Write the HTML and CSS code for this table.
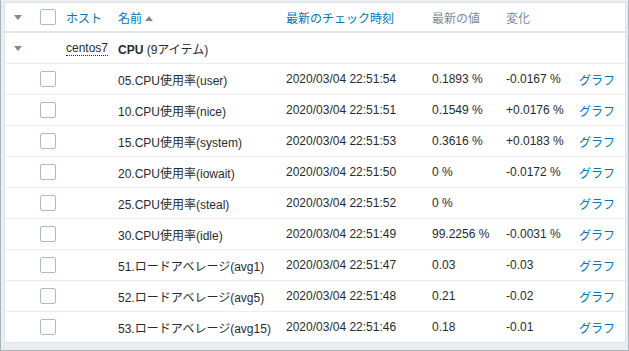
FILE: index.html
```html
<!DOCTYPE html>
<html lang="ja">
<head>
<meta charset="utf-8">
<title>最新データ</title>
<link rel="stylesheet" href="styles.css">
</head>
<body>
<div class="frame">
  <div class="box">
    <table class="list">
      <colgroup>
        <col class="c-tog"><col class="c-chk"><col class="c-host"><col class="c-name"><col class="c-time"><col class="c-val"><col class="c-chg"><col class="c-graph">
      </colgroup>
      <thead>
        <tr>
          <th><span class="tri"></span></th>
          <th><span class="chk"></span></th>
          <th><a class="link">ホスト</a></th>
          <th><a class="link">名前</a><span class="sort"></span></th>
          <th><a class="link">最新のチェック時刻</a></th>
          <th class="muted">最新の値</th>
          <th class="muted">変化</th>
          <th></th>
        </tr>
      </thead>
      <tbody>
        <tr class="group">
          <td><span class="tri"></span></td>
          <td></td>
          <td><span class="hint">centos7</span></td>
          <td colspan="5"><b>CPU</b> (9アイテム)</td>
        </tr>
        <tr><td></td><td><span class="chk"></span></td><td></td><td>05.CPU使用率(user)</td><td>2020/03/04 22:51:54</td><td>0.1893 %</td><td>-0.0167 %</td><td><a class="link">グラフ</a></td></tr>
        <tr><td></td><td><span class="chk"></span></td><td></td><td>10.CPU使用率(nice)</td><td>2020/03/04 22:51:51</td><td>0.1549 %</td><td>+0.0176 %</td><td><a class="link">グラフ</a></td></tr>
        <tr><td></td><td><span class="chk"></span></td><td></td><td>15.CPU使用率(system)</td><td>2020/03/04 22:51:53</td><td>0.3616 %</td><td>+0.0183 %</td><td><a class="link">グラフ</a></td></tr>
        <tr><td></td><td><span class="chk"></span></td><td></td><td>20.CPU使用率(iowait)</td><td>2020/03/04 22:51:50</td><td>0 %</td><td>-0.0172 %</td><td><a class="link">グラフ</a></td></tr>
        <tr><td></td><td><span class="chk"></span></td><td></td><td>25.CPU使用率(steal)</td><td>2020/03/04 22:51:52</td><td>0 %</td><td></td><td><a class="link">グラフ</a></td></tr>
        <tr><td></td><td><span class="chk"></span></td><td></td><td>30.CPU使用率(idle)</td><td>2020/03/04 22:51:49</td><td>99.2256 %</td><td>-0.0031 %</td><td><a class="link">グラフ</a></td></tr>
        <tr><td></td><td><span class="chk"></span></td><td></td><td>51.ロードアベレージ(avg1)</td><td>2020/03/04 22:51:47</td><td>0.03</td><td>-0.03</td><td><a class="link">グラフ</a></td></tr>
        <tr><td></td><td><span class="chk"></span></td><td></td><td>52.ロードアベレージ(avg5)</td><td>2020/03/04 22:51:48</td><td>0.21</td><td>-0.02</td><td><a class="link">グラフ</a></td></tr>
        <tr class="last"><td></td><td><span class="chk"></span></td><td></td><td>53.ロードアベレージ(avg15)</td><td>2020/03/04 22:51:46</td><td>0.18</td><td>-0.01</td><td><a class="link">グラフ</a></td></tr>
      </tbody>
    </table>
  </div>
</div>
</body>
</html>
```
FILE: styles.css
```css
html, body {
  margin: 0;
  padding: 0;
  background: #ebeef0;
}
body {
  font-family: "Liberation Sans", Arial, "Noto Sans CJK JP", sans-serif;
  font-size: 12px;
  color: #1f2c33;
}
.frame {
  box-sizing: border-box;
  width: 629px;
  height: 351px;
  padding: 2px 2px 6px 3px;
  border-left: 1px solid #a9b4ba;
  border-right: 1px solid #a9b4ba;
  border-bottom: 1px solid #a9b4ba;
  background: #ebeef0;
}
.box {
  background: #fff;
  border: 1px solid #dfe4e7;
  height: 339px;
  overflow: hidden;
}
.list {
  width: 620px;
  border-collapse: collapse;
  table-layout: fixed;
}
.c-tog { width: 30px; }
.c-chk { width: 26px; }
.c-host { width: 52px; }
.c-name { width: 168px; }
.c-time { width: 146px; }
.c-val { width: 74px; }
.c-chg { width: 73px; }
.c-graph { width: 51px; }
th, td {
  padding: 0 0 0 5px;
  text-align: left;
  vertical-align: middle;
  white-space: nowrap;
  overflow: hidden;
}
th {
  height: 28px;
  font-weight: normal;
  border-bottom: 2px solid #dfe4e7;
}
td {
  height: 30px;
  border-bottom: 1px solid #ebeef0;
}
tr.last td {
  border-bottom: none;
}
th:first-child, td:first-child {
  padding: 0 0 0 9px;
}
.link {
  color: #0275b8;
  text-decoration: none;
}
.muted {
  color: #768d99;
}
.tri {
  display: block;
  width: 0;
  height: 0;
  border-left: 4px solid transparent;
  border-right: 4px solid transparent;
  border-top: 5px solid #768d99;
}
.sort {
  display: inline-block;
  width: 0;
  height: 0;
  margin-left: 3px;
  border-left: 4px solid transparent;
  border-right: 4px solid transparent;
  border-bottom: 5px solid #768d99;
  vertical-align: middle;
  position: relative;
  top: -1px;
}
.chk {
  display: block;
  box-sizing: border-box;
  width: 16px;
  height: 16px;
  border: 1px solid #acbbc2;
  border-radius: 2px;
  background: #fff;
}
.hint {
  border-bottom: 1px dotted #1f2c33;
}
.group b {
  font-weight: bold;
}
```
